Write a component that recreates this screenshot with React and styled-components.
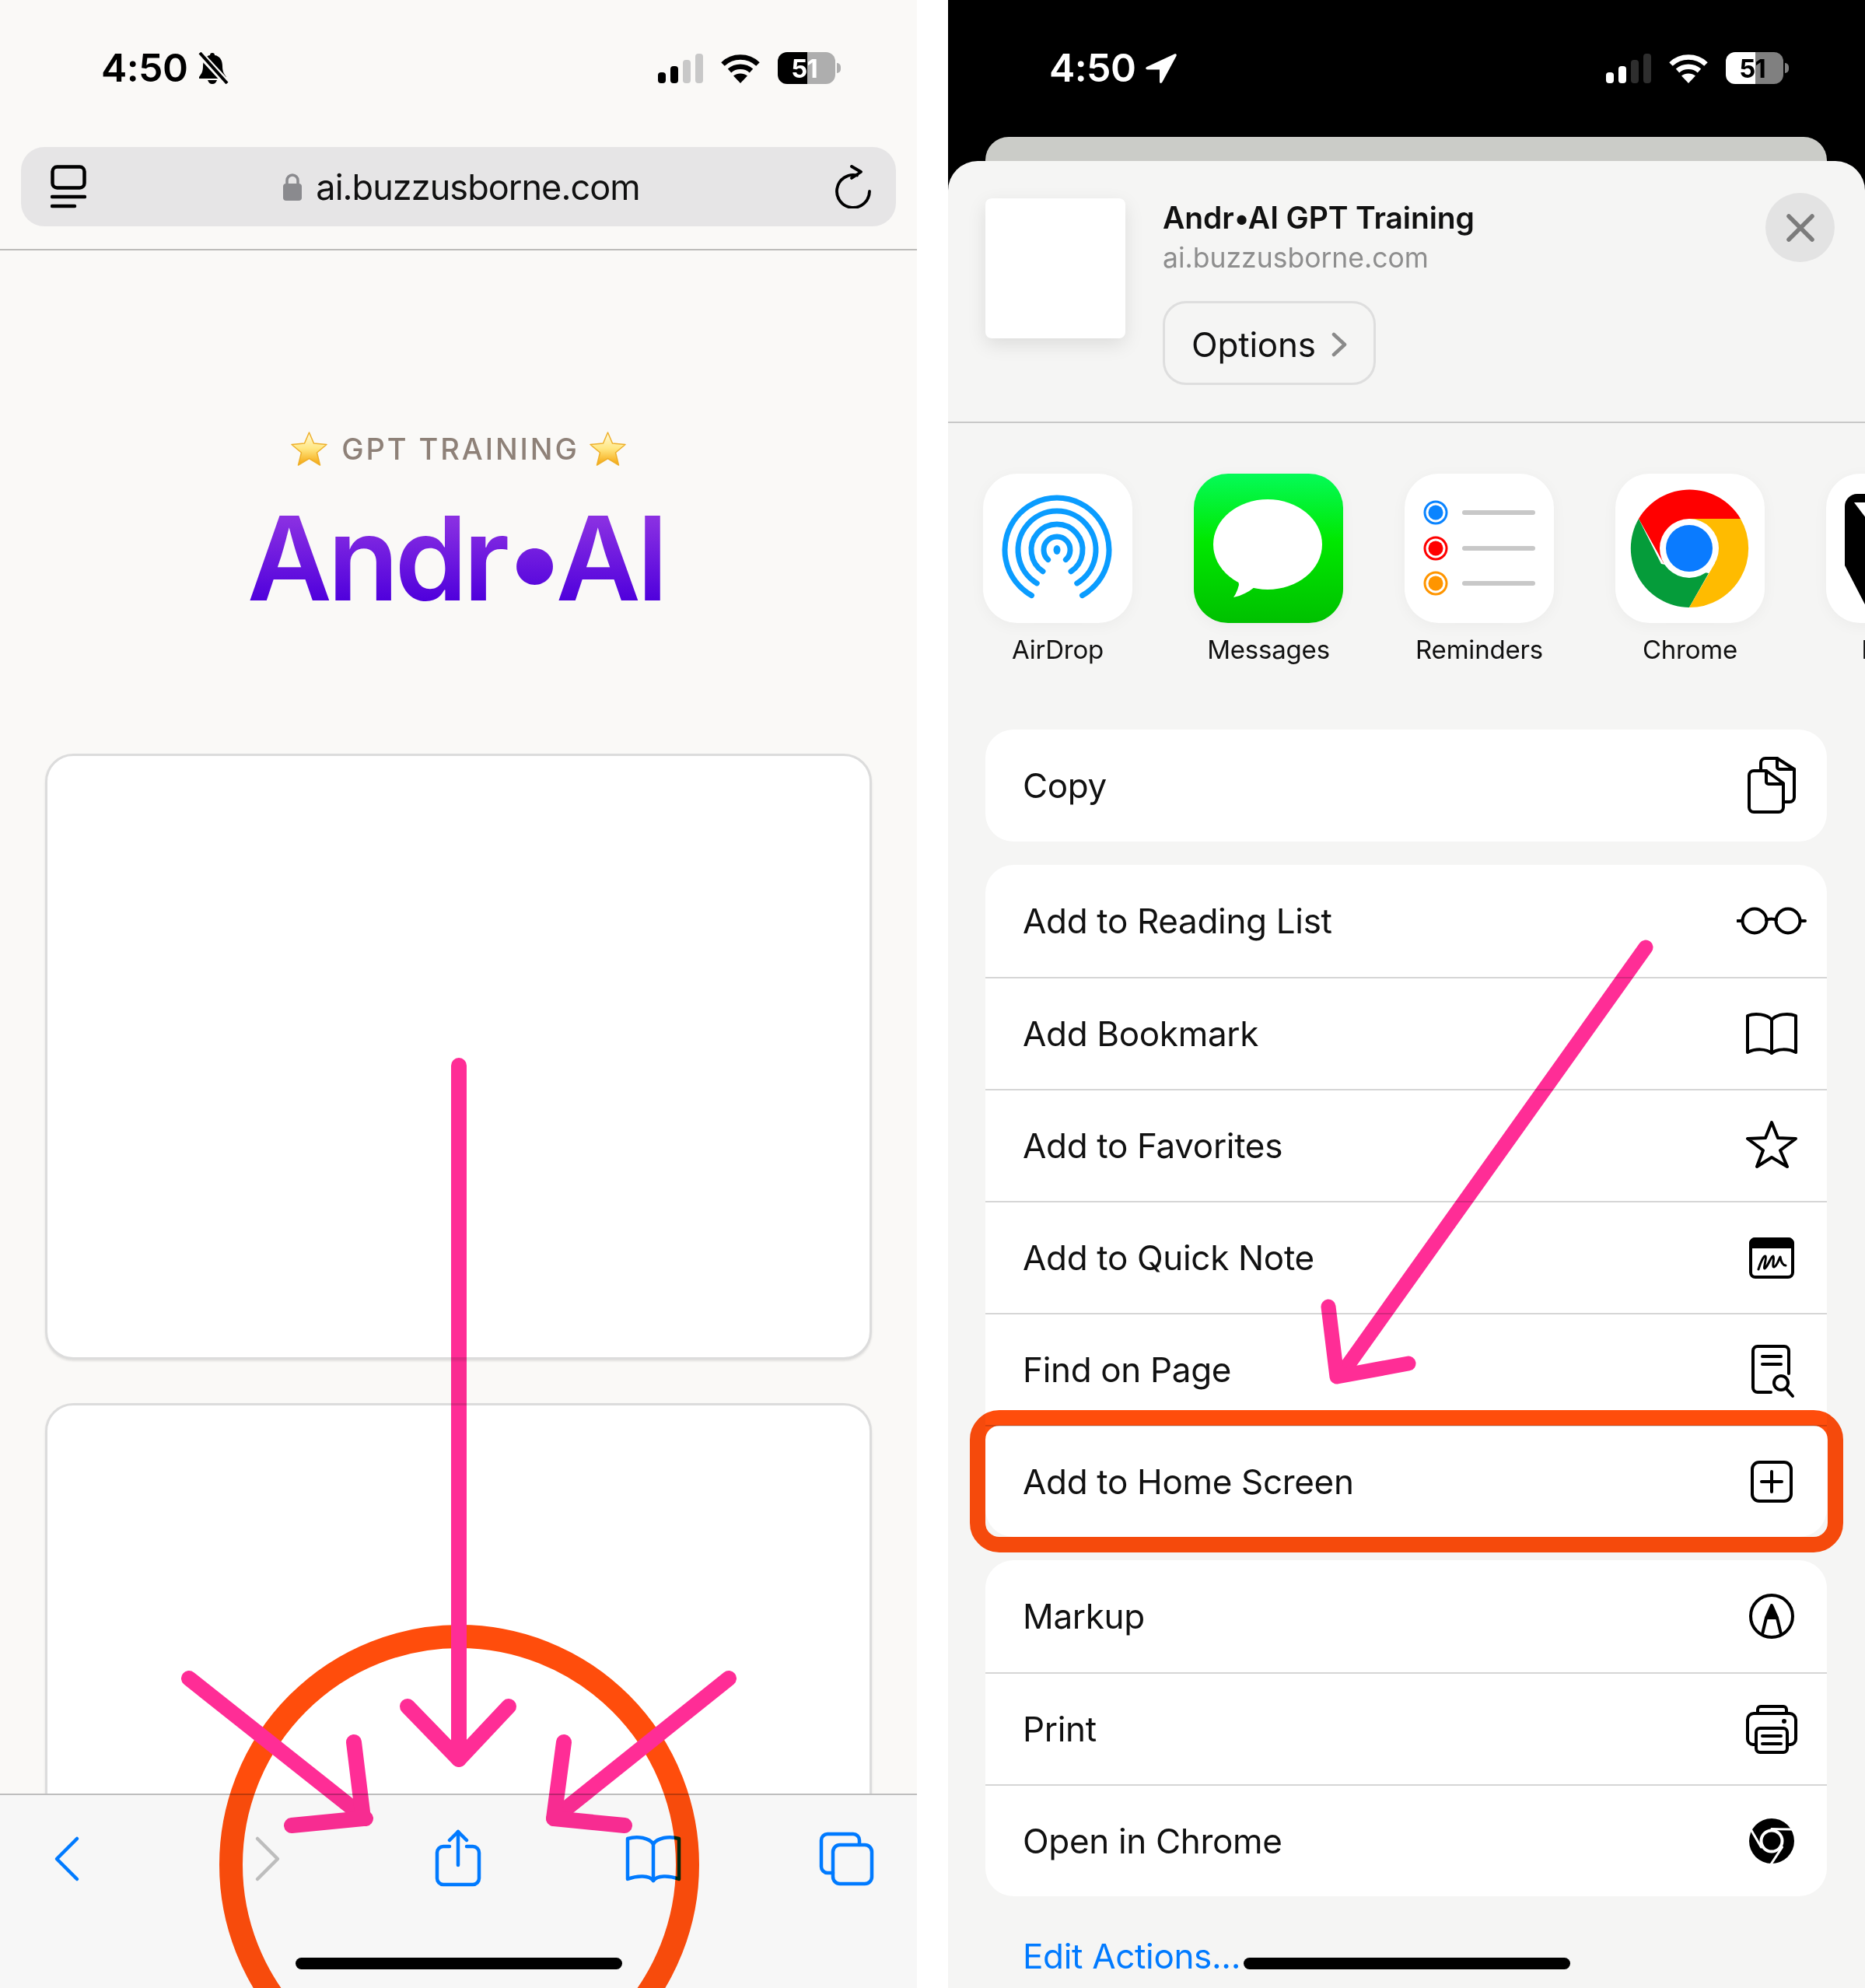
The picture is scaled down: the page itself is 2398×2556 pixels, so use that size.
import React from "react";
import styled, { createGlobalStyle } from "styled-components";

const GlobalStyle = createGlobalStyle`
  html, body { margin: 0; padding: 0; background: #fff; }
  body { font-family: "Inter", "Liberation Sans", sans-serif; }
  * { box-sizing: border-box; }
`;

const Screen = styled.div`
  display: flex;
  justify-content: space-between;
  width: 2398px;
  height: 2556px;
  overflow: hidden;
  background: #fff;
`;

const Phone = styled.section`
  position: relative;
  display: flex;
  flex-direction: column;
  width: 1179px;
  height: 2556px;
  overflow: hidden;
  background: ${(p) => (p.$dark ? "#000" : "#faf9f7")};
`;

const StatusBar = styled.div`
  display: flex;
  align-items: center;
  justify-content: space-between;
  height: 41px;
  margin-top: 67px;
  padding: 0 105px 0 130px;
  color: ${(p) => (p.$dark ? "#fff" : "#000")};
`;

const StatusLeft = styled.div`
  display: flex;
  align-items: center;
  gap: 13px;
`;

const StatusRight = styled.div`
  display: flex;
  align-items: center;
  gap: 22px;
`;

const Time = styled.span`
  font-size: 50px;
  line-height: 41px;
  font-weight: 600;
  letter-spacing: -0.6px;
`;

const Battery = styled.div`
  position: relative;
  width: 74px;
  height: 41px;
  padding-right: 6px;
  border-radius: 12px;
  display: flex;
  align-items: center;
  justify-content: center;
  font-size: 33px;
  font-weight: 700;
  letter-spacing: -1px;
  color: ${(p) => (p.$dark ? "#000" : "#fff")};
  background: linear-gradient(
    90deg,
    ${(p) => (p.$dark ? "#fff" : "#000")} 51%,
    ${(p) => (p.$dark ? "#808080" : "#aeaeae")} 51%
  );
  &::after {
    content: "";
    position: absolute;
    right: -7px;
    top: 14px;
    width: 5px;
    height: 13px;
    border-radius: 0 6px 6px 0;
    background: ${(p) => (p.$dark ? "#808080" : "#aeaeae")};
  }
`;

const AddressBar = styled.div`
  display: flex;
  align-items: center;
  justify-content: space-between;
  height: 102px;
  margin: 81px 27px 0 27px;
  padding: 0 30px 0 38px;
  border-radius: 30px;
  background: #e6e5e6;
`;

const AddressText = styled.div`
  display: flex;
  align-items: center;
  gap: 18px;
  margin-left: 2px;
  font-size: 45px;
  color: #111;
  letter-spacing: -0.95px;
`;

const BarRule = styled.div`
  height: 2px;
  margin-top: 29px;
  background: #bdbcba;
`;

const Hero = styled.main`
  flex: 1;
  min-height: 0;
  overflow: hidden;
  padding: 232px 58px 0 58px;
`;

const Eyebrow = styled.div`
  display: flex;
  align-items: center;
  justify-content: center;
  gap: 18px;
  height: 46px;
  font-size: 38px;
  font-weight: 500;
  letter-spacing: 2.9px;
  color: #8e8178;
  svg:last-child { margin-left: -5px; }
`;

const BigTitle = styled.h1`
  margin: 33px 0 0 0;
  padding-right: 7px;
  text-align: center;
  font-size: 150px;
  line-height: 170px;
  font-weight: 600;
  letter-spacing: -5.5px;
  background: linear-gradient(180deg, #8a30e2 20%, #4f00dc 82%);
  -webkit-background-clip: text;
  background-clip: text;
  color: transparent;
`;

const BlankCard = styled.div`
  height: ${(p) => p.$h}px;
  margin-top: ${(p) => p.$top}px;
  border: 3px solid #dcdcdc;
  border-radius: 36px;
  background: #fff;
  box-shadow: 0 2px 3px rgba(0, 0, 0, 0.1);
`;

const Toolbar = styled.nav`
  display: grid;
  grid-template-columns: 258px 245px 251px 248px 76px;
  height: 250px;
  padding: 44px 0 0 48px;
  border-top: 2px solid #bebebe;
  background: #f7f7f7;
`;

const ToolIcon = styled.svg`
  width: 76px;
  height: 76px;
  fill: none;
  stroke: ${(p) => p.$color || "#007aff"};
  stroke-width: 4.5;
  stroke-linecap: round;
  stroke-linejoin: round;
`;

const HomeBar = styled.div`
  position: absolute;
  left: 380px;
  bottom: 24px;
  width: 420px;
  height: 15px;
  border-radius: 8px;
  background: #000;
`;

const Marks = styled.svg`
  position: absolute;
  left: 0;
  top: 0;
  width: 1179px;
  height: 2556px;
  fill: none;
  mix-blend-mode: multiply;
  pointer-events: none;
`;

const Peek = styled.div`
  flex: none;
  height: 31px;
  margin: 68px 49px 0 48px;
  border-radius: 30px 30px 0 0;
  background: #cbccc8;
`;

const Sheet = styled.div`
  flex: 1;
  min-height: 0;
  border-radius: 38px 38px 0 0;
  background: #f5f5f4;
`;

const SheetHead = styled.header`
  position: relative;
  display: flex;
  gap: 48px;
  height: 337px;
  padding: 48px 0 0 48px;
  border-bottom: 2px solid #c8c8c8;
`;

const Thumb = styled.div`
  width: 180px;
  height: 180px;
  border-radius: 8px;
  background: #fff;
  box-shadow: 0 8px 24px rgba(0, 0, 0, 0.1);
`;

const HeadText = styled.div`
  display: flex;
  flex-direction: column;
  align-items: flex-start;
`;

const PageTitle = styled.div`
  margin-top: 1px;
  font-size: 39px;
  line-height: 48px;
  font-weight: 600;
  letter-spacing: -0.1px;
  color: #111;
`;

const PageUrl = styled.div`
  margin-top: 6px;
  font-size: 35.5px;
  line-height: 44px;
  color: #8e8e8e;
`;

const OptionsButton = styled.button`
  display: flex;
  align-items: center;
  gap: 20px;
  height: 108px;
  margin-top: 33px;
  padding: 4px 34px 0;
  border: 3px solid #dedede;
  border-radius: 30px;
  background: transparent;
  font-family: inherit;
  font-size: 44px;
  letter-spacing: -0.2px;
  color: #111;
`;

const CloseButton = styled.div`
  position: absolute;
  right: 39px;
  top: 41px;
  display: flex;
  align-items: center;
  justify-content: center;
  width: 89px;
  height: 89px;
  border-radius: 50%;
  background: #e3e3e3;
`;

const AppRow = styled.div`
  display: flex;
  gap: 79px;
  height: 394px;
  padding: 65px 0 0 45px;
  overflow: hidden;
`;

const AppItem = styled.div`
  flex: none;
  width: 192px;
  display: flex;
  flex-direction: column;
  align-items: center;
`;

const AppTile = styled.div`
  width: 192px;
  height: 192px;
  border-radius: 44px;
  overflow: hidden;
  background: ${(p) =>
    p.$green
      ? "linear-gradient(180deg, #05fb58 0%, #00e800 45%, #00c000 100%)"
      : "#fff"};
  box-shadow: 0 4px 20px rgba(0, 0, 0, 0.04);
  svg { display: block; width: 192px; height: 192px; }
`;

const AppName = styled.span`
  margin-top: 12px;
  font-size: 33px;
  line-height: 44px;
  letter-spacing: -0.2px;
  white-space: nowrap;
  color: #111;
`;

const Actions = styled.div`
  display: flex;
  flex-direction: column;
  gap: 30px;
  margin: 0 49px 0 48px;
`;

const ActionGroup = styled.div`
  border-radius: 36px;
  background: #fff;
  overflow: hidden;
`;

const ActionRow = styled.div`
  display: flex;
  align-items: center;
  justify-content: space-between;
  height: 144px;
  padding: 0 26px 0 48px;
  font-size: 44px;
  letter-spacing: -0.33px;
  color: #111;
  & + & { border-top: 2px solid #d6d6d6; }
`;

const RowIcon = styled.svg`
  flex: none;
  width: 90px;
  height: 90px;
  fill: none;
  stroke: #000;
  stroke-width: 4;
  stroke-linecap: round;
  stroke-linejoin: round;
`;

const EditLink = styled.div`
  margin: 53px 0 0 96px;
  font-size: 44px;
  line-height: 48px;
  letter-spacing: -0.33px;
  color: #007aff;
`;

const Signal = ({ dark }) => {
  const on = dark ? "#fff" : "#000";
  const off = dark ? "#2e2e2e" : "#c8c8c8";
  return (
    <svg width="58" height="38" viewBox="0 0 58 38">
      <rect x="0" y="24" width="10" height="14" rx="4" fill={on} />
      <rect x="16" y="16" width="10" height="22" rx="4" fill={on} />
      <rect x="32" y="8" width="10" height="30" rx="4" fill={off} />
      <rect x="48" y="0" width="10" height="38" rx="4" fill={off} />
    </svg>
  );
};

const Wifi = ({ dark }) => {
  const c = dark ? "#fff" : "#000";
  return (
    <svg width="52" height="38" viewBox="0 0 52 38" fill="none" stroke={c} strokeWidth="6.5">
      <path d="M3.5 13.5 C16 1.5 36 1.5 48.5 13.5" />
      <path d="M12 22 C19.5 15 32.5 15 40 22" />
      <path d="M26 38 L17 28.5 C22 24.5 30 24.5 35 28.5 Z" fill={c} stroke="none" />
    </svg>
  );
};

const BellSlash = () => (
  <svg width="40" height="41" viewBox="0 0 40 41">
    <path d="M19 1 c2 0 3 1 3 3 c7 1 10 7 10 14 c0 7 2 10 5 14 v2 H2 v-2 c3-4 5-7 5-14 c0-7 3-13 9-14 c0-2 1-3 3-3 Z" fill="#000" />
    <path d="M13 36 h12 c-1 3-3 5-6 5 s-5-2-6-5 Z" fill="#000" />
    <path d="M2 1 L38 40" stroke="#faf9f7" strokeWidth="9" />
    <path d="M3 1 L38 40" stroke="#000" strokeWidth="4" />
  </svg>
);

const LocationArrow = () => (
  <svg width="40" height="38" viewBox="0 0 40 38">
    <path d="M37 0.5 L1.5 17 c-2 1-1.5 3.5 1 3.5 H18 V36 c0 2.5 2.5 2.5 3.5 0.5 L39.5 3 c1-2 -0.5-3.5 -2.5-2.5 Z" fill="#fff" />
  </svg>
);

const SidebarGlyph = () => (
  <svg width="46" height="56" viewBox="0 0 46 56" fill="none" stroke="#000" strokeWidth="4.5" strokeLinecap="round">
    <rect x="2.5" y="2.5" width="41" height="27" rx="6" />
    <path d="M2 41 H44" />
    <path d="M2 53 H31" />
  </svg>
);

const LockGlyph = () => (
  <svg width="24" height="36" viewBox="0 0 24 36" fill="none">
    <path d="M5 16 V10 a7 7 0 0 1 14 0 V16" stroke="#8a8a8e" strokeWidth="3.5" />
    <rect x="0" y="14" width="24" height="22" rx="4" fill="#8a8a8e" />
  </svg>
);

const ReloadGlyph = () => (
  <svg width="48" height="56" viewBox="0 0 48 56" fill="none" stroke="#000" strokeWidth="3.8" strokeLinecap="round" strokeLinejoin="round">
    <path d="M28 13.5 A21 21 0 1 0 44 34" />
    <path d="M21 2 L33 9 L21 17" />
  </svg>
);

const TrainingStar = ({ id }) => (
  <svg width="47" height="44" viewBox="0 0 47 44">
    <defs>
      <linearGradient id={id} x1="0" y1="0" x2="0" y2="1">
        <stop offset="0" stopColor="#fffbe0" />
        <stop offset="0.5" stopColor="#ffe680" />
        <stop offset="1" stopColor="#f5a50c" />
      </linearGradient>
    </defs>
    <path
      d="M23.5 1 L29.5 15 L46 16.5 L33.5 27 L37.5 43 L23.5 34.5 L9.5 43 L13.5 27 L1 16.5 L17.5 15 Z"
      fill={`url(#${id})`}
      stroke="#eeb02b"
      strokeWidth="1.5"
      strokeLinejoin="round"
    />
  </svg>
);

const arc = (cx, cy, r, deg) => {
  const a = (deg * Math.PI) / 180;
  const dx = (r * Math.sin(a)).toFixed(1);
  const dy = (r * Math.cos(a)).toFixed(1);
  return `M${cx - dx} ${cy + +dy} A${r} ${r} 0 1 1 ${cx + +dx} ${cy + +dy}`;
};

const AirDropTile = () => (
  <svg viewBox="0 0 192 192" fill="none" stroke="#0a9cff" strokeWidth="7" strokeLinecap="round">
    <path d={arc(95, 98, 67, 29)} />
    <path d={arc(95, 98, 50, 31)} />
    <path d={arc(95, 98, 33, 33)} />
    <path d={arc(95, 98, 17, 42)} />
    <ellipse cx="95" cy="98" rx="4.5" ry="6" fill="#0a9cff" stroke="none" />
  </svg>
);

const MessagesTile = () => (
  <svg viewBox="0 0 192 192" fill="#fff">
    <ellipse cx="95" cy="91" rx="70" ry="58" />
    <path d="M56 130 L58 143 Q56 152 51 159 Q66 156 78 146 Z" />
  </svg>
);

const ReminderDot = ({ y, color }) => (
  <>
    <circle cx="40" cy={y} r="14" fill="none" stroke={color} strokeWidth="3" />
    <circle cx="40" cy={y} r="9.5" fill={color} />
    <rect x="74" y={y - 3} width="94" height="6" rx="3" fill="#c8c8c8" />
  </>
);

const RemindersTile = () => (
  <svg viewBox="0 0 192 192">
    <ReminderDot y={50} color="#0a84ff" />
    <ReminderDot y={96} color="#ff0000" />
    <ReminderDot y={141} color="#ff9500" />
  </svg>
);

const ChromeTile = () => (
  <svg viewBox="0 0 192 192">
    <path d="M30 58 A76 76 0 0 1 161 58 H95 L62 115 Z" fill="#ff0000" />
    <path d="M30 58 L59 116 L120 128 L95 172 A76 76 0 0 1 30 58 Z" fill="#059c3a" />
    <path d="M161 58 A76 76 0 0 1 95 172 L128 115 L95 58 Z" fill="#ffbb00" />
    <circle cx="95" cy="96" r="38" fill="#fff" />
    <circle cx="95" cy="96" r="30" fill="#0a7bff" />
  </svg>
);

const NotionTile = () => (
  <svg viewBox="0 0 192 192">
    <path d="M24 42 a16 16 0 0 1 16-16 H70 V176 H54 L24 118 Z" fill="#000" />
    <path d="M36 37 L52 58 H70 V37 Z" fill="#fff" />
  </svg>
);

const CopyIcon = () => (
  <RowIcon viewBox="0 0 90 90">
    <path d="M31 25 V16 a6 6 0 0 1 6-6 H52 L74 24 V60 a6 6 0 0 1-6 6 H60" />
    <path d="M52 10 V21 a3 3 0 0 0 3 3 H74" />
    <path d="M22 26 H38 L60 42 V73 a6 6 0 0 1-6 6 H22 a6 6 0 0 1-6-6 V32 a6 6 0 0 1 6-6 Z" />
    <path d="M38 26 V40 a3 3 0 0 0 3 3 H60" />
  </RowIcon>
);

const GlassesIcon = () => (
  <RowIcon viewBox="0 0 90 90">
    <circle cx="23" cy="45" r="15.5" />
    <circle cx="66" cy="45" r="15.5" />
    <path d="M38 44 C41 42 48 42 51 44" />
    <path d="M1 45 H7" />
    <path d="M82 45 H88" />
  </RowIcon>
);

const BookIcon = () => (
  <RowIcon viewBox="0 0 90 90">
    <path d="M45 27 C39 20 24 18 14 22 V69 C24 64 38 64 45 70 C52 64 66 64 76 69 V22 C66 18 51 20 45 27 Z" />
    <path d="M45 27 V70" />
  </RowIcon>
);

const StarIcon = () => (
  <RowIcon viewBox="0 0 90 90">
    <path d="M45 15 L53 35 L76 36 L56 51 L65 72 L45 60 L26 72 L34 51 L14 36 L37 35 Z" />
  </RowIcon>
);

const NoteIcon = () => (
  <RowIcon viewBox="0 0 90 90">
    <rect x="18" y="21" width="54" height="49" rx="6" />
    <path d="M24 21 H66 a6 6 0 0 1 6 6 V31 H18 V27 a6 6 0 0 1 6-6 Z" fill="#000" />
    <path d="M28 60 C31 50 35 42 37 43 C39 45 34 59 36 59 C40 57 44 43 47 43 C49 44 45 57 48 57 C52 56 54 47 56 44 C57 50 59 55 63 55" strokeWidth="3" />
  </RowIcon>
);

const FindIcon = () => (
  <RowIcon viewBox="0 0 90 90">
    <path d="M44 74 H27 a6 6 0 0 1-6-6 V21 a6 6 0 0 1 6-6 H61 a6 6 0 0 1 6 6 V50" />
    <path d="M33 28 H57" />
    <path d="M33 38 H57" />
    <circle cx="57" cy="62" r="9" />
    <path d="M63.5 69 L72 79" />
  </RowIcon>
);

const PlusIcon = () => (
  <RowIcon viewBox="0 0 90 90">
    <rect x="20" y="20" width="50" height="50" rx="9" />
    <path d="M32 45 H58" />
    <path d="M45 32 V58" />
  </RowIcon>
);

const MarkupIcon = () => (
  <RowIcon viewBox="0 0 90 90">
    <circle cx="45" cy="45" r="27" />
    <path d="M45 31 L52 47 H38 Z" fill="#000" />
    <path d="M38 47 L33 68" />
    <path d="M52 47 L57 68" />
  </RowIcon>
);

const PrintIcon = () => (
  <RowIcon viewBox="0 0 90 90">
    <path d="M27 25 V20 a4 4 0 0 1 4-4 H60 a4 4 0 0 1 4 4 V25" />
    <path d="M25 65 H21 a7 7 0 0 1-7-7 V33 a8 8 0 0 1 8-8 H68 a8 8 0 0 1 8 8 V58 a7 7 0 0 1-7 7 H65" />
    <rect x="25" y="44" width="40" height="31" rx="5" />
    <path d="M33 54 H57" />
    <path d="M33 64 H57" />
    <circle cx="61" cy="35" r="3" fill="#000" stroke="none" />
  </RowIcon>
);

const ChromeMonoIcon = () => (
  <RowIcon viewBox="0 0 90 90">
    <circle cx="45" cy="45" r="29" fill="#000" stroke="none" />
    <circle cx="45" cy="45" r="15.5" fill="#fff" stroke="none" />
    <circle cx="45" cy="45" r="11.5" fill="#000" stroke="none" />
    <path d="M45 29.5 L73 30" stroke="#fff" strokeWidth="3" />
    <path d="M31.5 53 L17 28" stroke="#fff" strokeWidth="3" />
    <path d="M58.5 53 L44 75" stroke="#fff" strokeWidth="3" />
  </RowIcon>
);

const appTiles = [
  { name: "AirDrop", tile: <AirDropTile /> },
  { name: "Messages", tile: <MessagesTile />, green: true },
  { name: "Reminders", tile: <RemindersTile /> },
  { name: "Chrome", tile: <ChromeTile /> },
  { name: "Notion", tile: <NotionTile /> },
];

const actionGroups = [
  [{ label: "Copy", icon: <CopyIcon /> }],
  [
    { label: "Add to Reading List", icon: <GlassesIcon /> },
    { label: "Add Bookmark", icon: <BookIcon /> },
    { label: "Add to Favorites", icon: <StarIcon /> },
    { label: "Add to Quick Note", icon: <NoteIcon /> },
    { label: "Find on Page", icon: <FindIcon /> },
    { label: "Add to Home Screen", icon: <PlusIcon /> },
  ],
  [
    { label: "Markup", icon: <MarkupIcon /> },
    { label: "Print", icon: <PrintIcon /> },
    { label: "Open in Chrome", icon: <ChromeMonoIcon /> },
  ],
];

const App = () => (
  <>
    <GlobalStyle />
    <Screen>
      <Phone>
        <StatusBar>
          <StatusLeft>
            <Time>4:50</Time>
            <BellSlash />
          </StatusLeft>
          <StatusRight>
            <Signal />
            <Wifi />
            <Battery>51</Battery>
          </StatusRight>
        </StatusBar>
        <AddressBar>
          <SidebarGlyph />
          <AddressText>
            <LockGlyph />
            ai.buzzusborne.com
          </AddressText>
          <ReloadGlyph />
        </AddressBar>
        <BarRule />
        <Hero>
          <Eyebrow>
            <TrainingStar id="star-a" />
            GPT TRAINING
            <TrainingStar id="star-b" />
          </Eyebrow>
          <BigTitle>Andr•AI</BigTitle>
          <BlankCard $top={166} $h={779} />
          <BlankCard $top={56} $h={600} />
        </Hero>
        <Toolbar>
          <ToolIcon viewBox="0 0 76 76"><path d="M51 12 L25 38 L51 64" /></ToolIcon>
          <ToolIcon viewBox="0 0 76 76" $color="#bdbdbd"><path d="M25 12 L51 38 L25 64" /></ToolIcon>
          <ToolIcon viewBox="0 0 76 76">
            <path d="M27 22 H19 a8 8 0 0 0-8 8 V63 a8 8 0 0 0 8 8 H57 a8 8 0 0 0 8-8 V30 a8 8 0 0 0-8-8 H49" />
            <path d="M38 3 V46" />
            <path d="M27 14 L38 3 L49 14" />
          </ToolIcon>
          <ToolIcon viewBox="0 0 76 76">
            <path d="M38 19 C33 11 18 8 5 12 V64 C18 59 33 59 38 66 C43 59 58 59 71 64 V12 C58 8 43 11 38 19 Z" />
            <path d="M38 19 V66" />
          </ToolIcon>
          <ToolIcon viewBox="0 0 76 76">
            <path d="M21 56 H14 a8 8 0 0 1-8-8 V14 a8 8 0 0 1 8-8 H47 a8 8 0 0 1 8 8 V20" />
            <rect x="21" y="20" width="50" height="50" rx="9" />
          </ToolIcon>
        </Toolbar>
        <HomeBar />
        <Marks viewBox="0 0 1179 2556">
          <circle cx="590.5" cy="2397.5" r="293.5" stroke="#ff4d0c" strokeWidth="30" />
          <g stroke="#ff2d96" strokeWidth="20" strokeLinecap="round" strokeLinejoin="round">
            <path d="M590 1370 V2262" />
            <path d="M524 2194 L590 2262 L654 2194" />
            <path d="M243 2158 L470 2338" />
            <path d="M455 2240 L467 2338 L375 2347" />
            <path d="M937 2158 L712 2338" />
            <path d="M725 2240 L712 2338 L803 2347" />
          </g>
        </Marks>
      </Phone>

      <Phone $dark>
        <StatusBar $dark>
          <StatusLeft>
            <Time>4:50</Time>
            <LocationArrow />
          </StatusLeft>
          <StatusRight>
            <Signal dark />
            <Wifi dark />
            <Battery $dark>51</Battery>
          </StatusRight>
        </StatusBar>
        <Peek />
        <Sheet>
          <SheetHead>
            <Thumb />
            <HeadText>
              <PageTitle>Andr•AI GPT Training</PageTitle>
              <PageUrl>ai.buzzusborne.com</PageUrl>
              <OptionsButton>
                Options
                <svg width="20" height="32" viewBox="0 0 20 32" fill="none" stroke="#8a8a8a" strokeWidth="4.5" strokeLinecap="round" strokeLinejoin="round">
                  <path d="M3 3 L17 16 L3 29" />
                </svg>
              </OptionsButton>
            </HeadText>
            <CloseButton>
              <svg width="36" height="36" viewBox="0 0 36 36" stroke="#7c7c7c" strokeWidth="5.5" strokeLinecap="round">
                <path d="M3 3 L33 33" />
                <path d="M33 3 L3 33" />
              </svg>
            </CloseButton>
          </SheetHead>
          <AppRow>
            {appTiles.map((app) => (
              <AppItem key={app.name}>
                <AppTile $green={app.green}>{app.tile}</AppTile>
                <AppName>{app.name}</AppName>
              </AppItem>
            ))}
          </AppRow>
          <Actions>
            {actionGroups.map((group) => (
              <ActionGroup key={group[0].label}>
                {group.map((row) => (
                  <ActionRow key={row.label}>
                    {row.label}
                    {row.icon}
                  </ActionRow>
                ))}
              </ActionGroup>
            ))}
          </Actions>
          <EditLink>Edit Actions...</EditLink>
        </Sheet>
        <HomeBar />
        <Marks viewBox="1219 0 1179 2556">
          <rect x="1257" y="1823" width="1103" height="163" rx="28" stroke="#ff4d0c" strokeWidth="20" />
          <g stroke="#ff2d96" strokeWidth="19" strokeLinecap="round" strokeLinejoin="round">
            <path d="M2116 1218 L1724 1768" />
            <path d="M1708 1680 L1719 1770 L1811 1753" />
          </g>
        </Marks>
      </Phone>
    </Screen>
  </>
);

export default App;
